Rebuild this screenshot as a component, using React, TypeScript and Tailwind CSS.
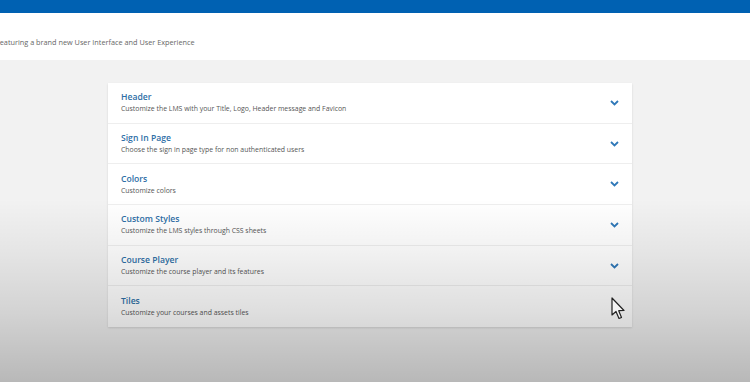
import React from "react";

const rows = [
  { t: "Header", d: "Customize the LMS with your Title, Logo, Header message and Favicon", chev: true },
  { t: "Sign In Page", d: "Choose the sign in page type for non authenticated users", chev: true },
  { t: "Colors", d: "Customize colors", chev: true },
  { t: "Custom Styles", d: "Customize the LMS styles through CSS sheets", chev: true },
  { t: "Course Player", d: "Customize the course player and its features", chev: true },
  { t: "Tiles", d: "Customize your courses and assets tiles", chev: false },
];

function Chevron() {
  return (
    <svg width="9" height="6" viewBox="0 0 9 6" className="shrink-0">
      <path d="M1 1 L4.5 4.5 L8 1" fill="none" stroke="#2f78b8" strokeWidth="1.8" />
    </svg>
  );
}

function Cursor() {
  return (
    <svg width="16" height="24" viewBox="0 0 16 24" className="absolute left-[611px] top-[297px]">
      <path
        d="M1 1 L1 18 L5 14.5 L8 21.5 L10.5 20.5 L7.7 13.7 L13 13.5 Z"
        fill="#f4f4f4"
        stroke="#222"
        strokeWidth="1.2"
        strokeLinejoin="round"
      />
    </svg>
  );
}

export default function App() {
  return (
    <div
      className="relative w-[750px] h-[382px] overflow-hidden bg-[#f2f2f2]"
      style={{ fontFamily: '"Open Sans", "Noto Sans", sans-serif' }}
    >
      <div className="h-[13px] bg-[#0061b2]" />
      <div className="h-[47px] bg-white pt-[24px]">
        <div className="ml-[-4px] text-[7.3px] leading-[10px] text-[#666] whitespace-nowrap">
          Featuring a brand new User Interface and User Experience
        </div>
      </div>
      <div className="pt-[23px] flex justify-center">
        <div className="w-[524px] ml-[-10px] bg-white shadow-[0_1px_2px_rgba(0,0,0,0.12)] flex flex-col">
          {rows.map((r, i) => (
            <div
              key={r.t}
              className={`h-[40.7px] flex items-center pl-[13px] pr-[13px] ${i < rows.length - 1 ? "border-b border-[#eeeeee]" : ""}`}
            >
              <div className="flex-1 flex flex-col">
                <div className="text-[8.6px] font-semibold text-[#2d6ea6] leading-[12px]">{r.t}</div>
                <div className="text-[6.9px] text-[#555] leading-[10px] mt-[1px]">{r.d}</div>
              </div>
              {r.chev && <Chevron />}
            </div>
          ))}
        </div>
      </div>
      <div className="pointer-events-none absolute inset-0 bg-[linear-gradient(to_bottom,rgba(0,0,0,0)_0%,rgba(0,0,0,0)_52%,rgba(0,0,0,0.05)_65%,rgba(0,0,0,0.13)_82%,rgba(0,0,0,0.24)_100%)]" />
      <Cursor />
    </div>
  );
}
